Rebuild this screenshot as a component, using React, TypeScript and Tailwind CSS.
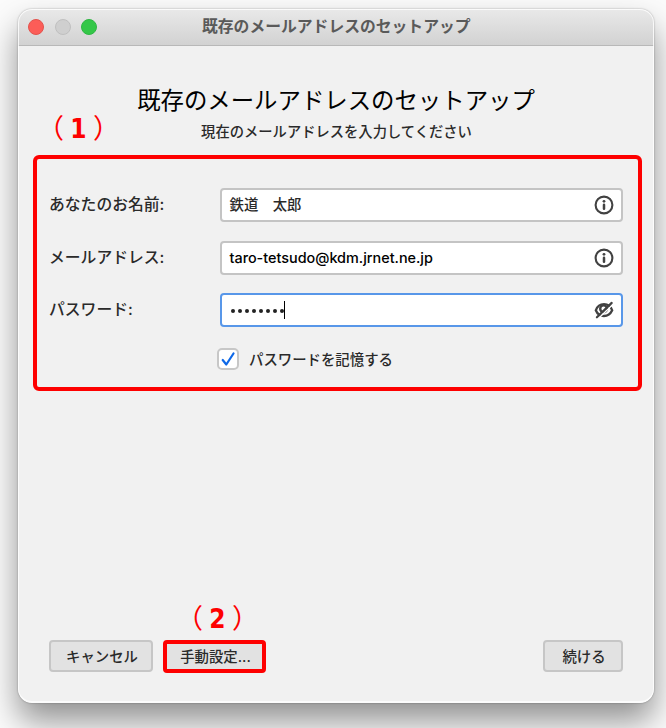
import type { ReactNode } from 'react'

function InfoIcon() {
  return (
    <svg width="20" height="20" viewBox="0 0 20 20" fill="none">
      <circle cx="10" cy="10" r="8.4" stroke="#424242" strokeWidth="2.1" />
      <circle cx="10" cy="6.3" r="1.4" fill="#424242" />
      <path d="M10 9.8v3.9" stroke="#424242" strokeWidth="2.5" strokeLinecap="round" />
    </svg>
  )
}

function HiddenEyeIcon() {
  return (
    <svg width="20" height="20" viewBox="0 0 20 20" fill="none" stroke="#424242" strokeLinecap="round">
      <path d="M1.8 10.3C3.4 6.1 6.5 4.2 10 4.2s6.6 1.9 8.2 6.1c-1.8 3.9-4.7 5.7-8.2 5.7s-6.6-1.8-8.2-5.7z" strokeWidth="2.3" />
      <circle cx="9.6" cy="8.8" r="3.4" strokeWidth="2.4" />
      <path d="M4.6 18.2L19.2 4" stroke="#fff" strokeWidth="1.5" />
      <path d="M2.9 17.3L17.7 2.9" strokeWidth="2.2" />
    </svg>
  )
}

function Field({ label, icon, focused, children }: { label: string; icon: ReactNode; focused?: boolean; children: ReactNode }) {
  return (
    <div className="flex h-[34px] items-center font-medium">
      <label className="-ml-px w-[171px] text-[15.8px]">{label}</label>
      <div
        className={`flex h-[34px] w-[403px] items-center justify-between rounded-[4px] border-2 bg-white pr-[7px] pl-[7.5px] text-[14.4px] ${
          focused ? 'border-[#5897e9]' : 'border-[#c4c4c4]'
        }`}
      >
        <div className="flex items-center">{children}</div>
        {icon}
      </div>
    </div>
  )
}

function Step({ number }: { number: string }) {
  return (
    <span className="flex items-center text-[27px] leading-none text-[#fe0000]">
      （<b className="w-[29px] text-center font-['DejaVu_Sans_Condensed','DejaVu_Sans',sans-serif] text-[26px]">{number}</b>）
    </span>
  )
}

export default function App() {
  const dots = Array.from({ length: 8 })

  return (
    <div className="h-[728px] w-[666px] overflow-hidden bg-[#fbfbfb] pt-[9px] pl-[18px] font-['Inter','Noto_Sans_CJK_JP',sans-serif] text-[#2a2a2a] whitespace-nowrap">
      <div className="relative flex h-[694px] w-[636px] flex-col overflow-hidden rounded-[14px] bg-[#f1f1f1] shadow-[0_0_2px_rgba(0,0,0,0.35),0_18px_32px_rgba(0,0,0,0.42)]">
        {/* Title bar */}
        <header className="flex h-[37px] shrink-0 items-center border-b border-[#b8b8b8] bg-gradient-to-b from-[#e9e9e9] to-[#d2d2d2] pl-[10px]">
          <div className="flex w-[174px] gap-[10.5px]">
            <span className="size-[16px] rounded-full border border-[#e2534d] bg-[#fc5d58]" />
            <span className="size-[16px] rounded-full border border-[#bfbfbf] bg-[#cfcfcf]" />
            <span className="size-[16px] rounded-full border border-[#30b644] bg-[#34c748]" />
          </div>
          <p className="text-[15.8px] font-bold text-[#5a5a5a]">既存のメールアドレスのセットアップ</p>
        </header>

        <div className="flex flex-1 flex-col px-[15px]">
          <h1 className="mt-[36.5px] text-center text-[23.4px] leading-[36px] text-black">既存のメールアドレスのセットアップ</h1>
          <p className="mt-[3.5px] pl-px text-center text-[14.3px] leading-[20px] font-medium">現在のメールアドレスを入力してください</p>

          {/* Account form */}
          <section className="mt-[13px] h-[236px] w-[609px] rounded-[6px] border-4 border-[#fe0000] pt-[29px] pl-[13px]">
            <div className="flex flex-col gap-[18.5px]">
              <Field label="あなたのお名前:" icon={<InfoIcon />}>鉄道　太郎</Field>
              <Field label="メールアドレス:" icon={<InfoIcon />}>
                <span className="text-black">taro-tetsudo@kdm.jrnet.ne.jp</span>
              </Field>
              <Field label="パスワード:" icon={<HiddenEyeIcon />} focused>
                <span className="flex gap-[3px] pt-[2px] pl-px">
                  {dots.map((_, i) => (
                    <i key={i} className="size-[4px] rounded-full bg-[#222]" />
                  ))}
                </span>
                <span className="h-[18px] w-px bg-black" />
              </Field>
            </div>
            <div className="mt-[20px] ml-[167px] flex items-center gap-[10px]">
              <span className="flex size-[22px] items-center justify-center rounded-[5px] border-2 border-[#c7c7c7] bg-white">
                <svg width="16" height="16" viewBox="0 0 16 16" fill="none">
                  <path d="M2.7 9l3.6 4.5 7.2-11" stroke="#0d68e8" strokeWidth="2.2" strokeLinecap="round" strokeLinejoin="round" />
                </svg>
              </span>
              <span className="pt-[2px] text-[14.4px] leading-[22px] font-medium">パスワードを記憶する</span>
            </div>
          </section>

          {/* Footer buttons */}
          <footer className="mt-auto mb-[30px] flex h-[34px] items-center pr-[16px] pl-[16px] text-[14.4px] font-medium">
            <button className="h-[32px] w-[104px] rounded-[4px] border-2 border-[#c6c6c6] bg-[#e2e2e2] pt-px pl-[2px]">キャンセル</button>
            <button className="ml-[10px] h-[33px] w-[103px] rounded-[4px] border-4 border-[#fe0000] bg-[#e2e2e2] pt-px pl-[2px]">手動設定...</button>
            <button className="ml-auto h-[32px] w-[80px] rounded-[4px] border-2 border-[#c6c6c6] bg-[#e2e2e2] pt-px pl-[2px]">続ける</button>
          </footer>
        </div>

        {/* Step callouts */}
        <div className="absolute top-[106px] left-[19px]">
          <Step number="1" />
        </div>
        <div className="absolute top-[596px] left-[158px]">
          <Step number="2" />
        </div>
        <div className="pointer-events-none absolute inset-0 rounded-[14px] border border-b-2 border-white/80" />
      </div>
    </div>
  )
}
